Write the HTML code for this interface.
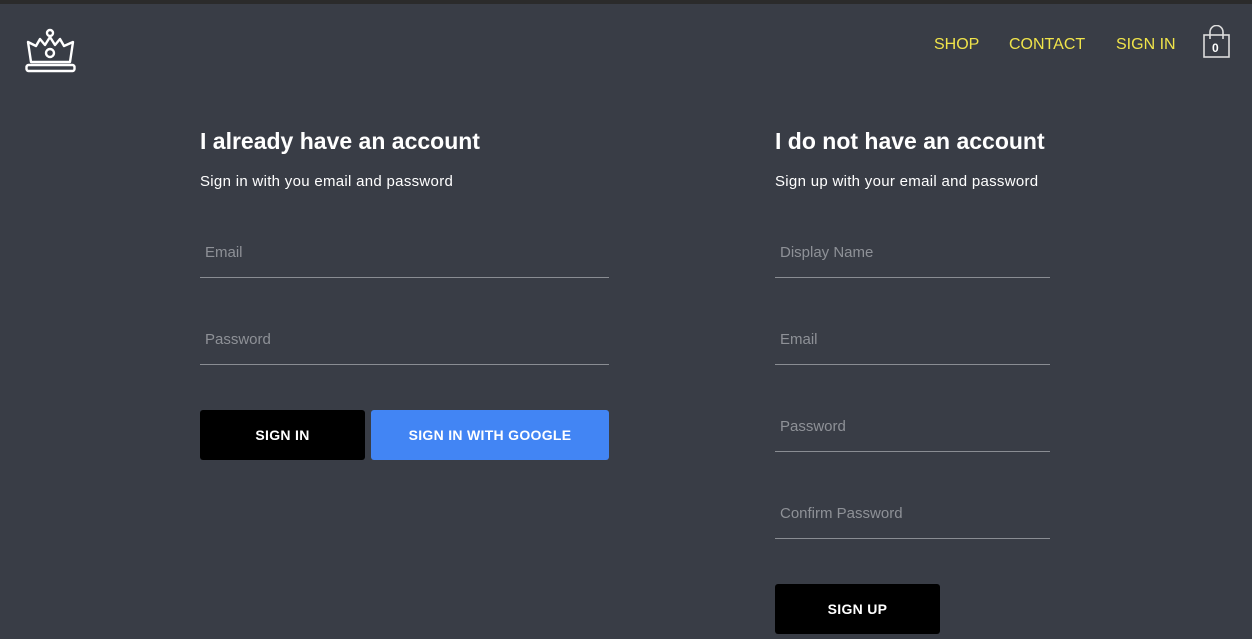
<!DOCTYPE html>
<html><head><style>
*{margin:0;padding:0;box-sizing:border-box}
body{width:1252px;height:639px;background:#393d46;font-family:"Liberation Sans",sans-serif;position:relative;overflow:hidden;color:#fff}
.top{position:absolute;left:0;top:0;width:1252px;height:4px;background:#2b2b2b}
.nav a{position:absolute;top:36px;color:#f0e44a;font-size:16px;text-decoration:none}
h2{position:absolute;font-size:23px;font-weight:bold;letter-spacing:0px}
.sub{position:absolute;font-size:15px;letter-spacing:0.3px}
.f{position:absolute;border-bottom:1px solid #8a8d93;height:40px;color:#8e9197;font-size:15px;padding:6px 0 0 5px}
.btn{position:absolute;height:50px;border-radius:3px;font-size:14px;font-weight:bold;display:flex;align-items:center;justify-content:center;letter-spacing:0.3px}
</style></head><body>
<div class="top"></div>
<svg style="position:absolute;left:0;top:0" width="100" height="90" viewBox="0 0 100 90" fill="none" stroke="#fff" stroke-width="2.4" stroke-linejoin="round">
<circle cx="50" cy="33" r="3"/>
<path d="M28 42 L31 62 L70 62 L73 42 L64 46 L60 39 L55 45 L50 37 L45 45 L40 39 L36 46 Z"/>
<circle cx="50" cy="53" r="4"/>
<rect x="26.5" y="65" width="48" height="6" rx="2"/>
</svg>
<div class="nav"><a style="left:934px">SHOP</a><a style="left:1009px">CONTACT</a><a style="left:1116px">SIGN IN</a></div>
<svg style="position:absolute;left:1202px;top:25px" width="30" height="34" viewBox="0 0 30 34" fill="none" stroke="#ddd" stroke-width="1.6">
<rect x="2" y="10" width="25" height="22"/><path d="M8 14 V7 a6.5 6.5 0 0 1 13 0 V14"/>
<text x="10" y="27" fill="#fff" stroke="none" font-size="12" font-weight="bold" font-family="Liberation Sans">0</text>
</svg>
<h2 style="left:200px;top:128px">I already have an account</h2>
<div class="sub" style="left:200px;top:173px">Sign in with you email and password</div>
<div class="f" style="left:200px;top:238px;width:409px">Email</div>
<div class="f" style="left:200px;top:325px;width:409px">Password</div>
<div class="btn" style="left:200px;top:410px;width:165px;background:#000">SIGN IN</div>
<div class="btn" style="left:371px;top:410px;width:238px;background:#4285f4">SIGN IN WITH GOOGLE</div>
<h2 style="left:775px;top:128px">I do not have an account</h2>
<div class="sub" style="left:775px;top:173px">Sign up with your email and password</div>
<div class="f" style="left:775px;top:238px;width:275px">Display Name</div>
<div class="f" style="left:775px;top:325px;width:275px">Email</div>
<div class="f" style="left:775px;top:412px;width:275px">Password</div>
<div class="f" style="left:775px;top:499px;width:275px">Confirm Password</div>
<div class="btn" style="left:775px;top:584px;width:165px;background:#000">SIGN UP</div>
</body></html>
